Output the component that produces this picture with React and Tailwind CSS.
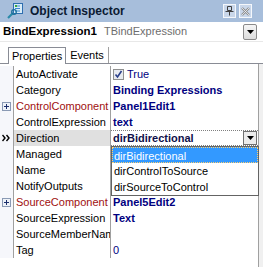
import React from 'react'

const rows = [
  { name: 'AutoActivate', value: 'True', kind: 'check' },
  { name: 'Category', value: 'Binding Expressions', kind: 'bold' },
  { name: 'ControlComponent', value: 'Panel1Edit1', kind: 'bold', red: true, expand: true },
  { name: 'ControlExpression', value: 'text', kind: 'bold' },
  { name: 'Direction', value: 'dirBidirectional', kind: 'selected' },
  { name: 'Managed', value: '', kind: 'plain' },
  { name: 'Name', value: '', kind: 'plain' },
  { name: 'NotifyOutputs', value: '', kind: 'plain' },
  { name: 'SourceComponent', value: 'Panel5Edit2', kind: 'bold', red: true, expand: true },
  { name: 'SourceExpression', value: 'Text', kind: 'bold' },
  { name: 'SourceMemberName', value: '', kind: 'plain' },
  { name: 'Tag', value: '0', kind: 'plain' },
]

function DownArrow() {
  return (
    <svg width="7" height="4" viewBox="0 0 7 4">
      <path d="M0 0h7L3.5 4z" fill="#000" />
    </svg>
  )
}

function ExpandBox() {
  return (
    <svg width="9" height="9" viewBox="0 0 9 9">
      <rect x="0.5" y="0.5" width="8" height="8" fill="#eef2f8" stroke="#8a9ab4" />
      <path d="M2 4.5h5M4.5 2v5" stroke="#1c2f6c" />
    </svg>
  )
}

function Row({ row }) {
  const sel = row.kind === 'selected'
  return (
    <div className="flex h-[16px] text-[11px] leading-[16px]">
      <div className="w-[14px] shrink-0 border-r border-[#a0a0a0] bg-[#f6f7fb] flex items-center justify-center">
        {row.expand && <ExpandBox />}
        {sel && (
          <svg width="10" height="8" viewBox="0 0 10 8">
            <path d="M0.5 1l2.5 3-2.5 3M4.5 1l2.5 3-2.5 3" stroke="#000" strokeWidth="1.4" fill="none" />
          </svg>
        )}
      </div>
      <div className={`w-[97px] shrink-0 border-r border-[#a0a0a0] pl-[2px] overflow-hidden whitespace-nowrap ${sel ? 'bg-[#e0e0e0]' : ''} ${row.red ? 'text-[#a01010]' : 'text-black'}`}>
        {row.name}
      </div>
      <div className={`flex-1 min-w-0 pl-[2px] flex items-center whitespace-nowrap ${sel ? 'border-y border-dotted border-[#808080]' : ''}`}>
        {row.kind === 'check' && (
          <>
            <span className="w-[11px] h-[11px] border border-[#8e8f8f] bg-[#e8eaf0] flex items-center justify-center mr-[3px]">
              <svg width="9" height="9" viewBox="0 0 9 9">
                <path d="M1.5 4.5l2 2.5 4-6" stroke="#2a3f8a" strokeWidth="1.6" fill="none" />
              </svg>
            </span>
            <span className="text-[#000080]">{row.value}</span>
          </>
        )}
        {row.kind === 'bold' && <span className="font-bold text-[#000080]">{row.value}</span>}
        {row.kind === 'plain' && <span className="text-[#000080]">{row.value}</span>}
        {sel && (
          <>
            <span className="font-bold text-[#10104a] flex-1">{row.value}</span>
            <span className="w-[14px] h-[14px] mr-[1px] border border-[#707070] bg-[#ececec] flex items-center justify-center">
              <DownArrow />
            </span>
          </>
        )}
      </div>
    </div>
  )
}

export default function App() {
  return (
    <div className="w-[263px] h-[267px] overflow-hidden bg-white font-['Liberation_Sans',Arial,sans-serif] relative">
      {/* title bar */}
      <div className="h-[22px] bg-[#a7bedb] flex items-center">
        <svg className="ml-[7px]" width="16" height="16" viewBox="0 0 16 16">
          <rect x="6.5" y="0.5" width="9" height="10" fill="#d8ecf8" stroke="#2f6fb0" />
          <path d="M8 3h5M8 5.5h5M8 8h5" stroke="#3a8ad0" />
          <rect x="8" y="2" width="2" height="2" fill="#3caa3c" />
          <path d="M1 15l5-5" stroke="#2a8aa8" strokeWidth="2.2" />
          <circle cx="7" cy="9" r="2.3" fill="none" stroke="#1b6f9a" strokeWidth="1.3" />
        </svg>
        <span className="ml-[7px] text-[12px] font-bold text-[#0b1a33]">Object Inspector</span>
        <div className="ml-auto mr-[11px] flex gap-[3px]">
          <span className="w-[13px] h-[14px] border border-[#f4f7fb] bg-[#c9d7ea] flex items-center justify-center">
            <svg width="9" height="10" viewBox="0 0 9 10">
              <path d="M2.5 0.5h4v4h-4zM0.5 5.5h8M4.5 5.5v4" stroke="#404040" fill="none" />
            </svg>
          </span>
          <span className="w-[13px] h-[14px] border border-[#f4f7fb] bg-[#c9d7ea] flex items-center justify-center">
            <svg width="9" height="9" viewBox="0 0 9 9">
              <path d="M1 1l7 7M8 1l-7 7" stroke="#909090" strokeWidth="2.4" />
              <path d="M1 1l7 7M8 1l-7 7" stroke="#eef2f8" strokeWidth="0.8" />
            </svg>
          </span>
        </div>
      </div>

      {/* component selector */}
      <div className="h-[20px] flex items-center pl-[3px] text-[11px] border-b border-[#e8e8e8]">
        <span className="font-bold text-[11.5px] text-black">BindExpression1</span>
        <span className="ml-[7px] text-[#6d6d6d]">TBindExpression</span>
        <span className="ml-auto mr-[6px] w-[14px] h-[16px] border border-[#8a8a8a] rounded-[2px] bg-gradient-to-b from-[#f6f6f6] to-[#dcdcdc] flex items-center justify-center">
          <DownArrow />
        </span>
      </div>

      {/* tabs */}
      <div className="h-[22px] pt-[5px] flex items-end border-b border-[#898c95] pl-[8px] text-[11px]">
        <div className="h-[17px] px-[3px] border border-b-0 border-[#898c95] bg-white leading-[16px] -mb-px text-black">
          Properties
        </div>
        <div className="h-[16px] pl-[4px] pr-[4px] leading-[16px] border-r border-[#a0a0a0] text-black">
          Events
        </div>
      </div>

      {/* grid */}
      <div className="w-[259px] h-[203px] border-r border-[#a0a0a0] pt-[2px] relative">
        {rows.map(r => (
          <Row key={r.name} row={r} />
        ))}

        {/* open dropdown */}
        <div className="absolute left-[111px] top-[82px] w-[148px] border border-[#646464] bg-white text-[11px] leading-[16px]">
          <div className="h-[16px] pl-[1px] bg-[#3399ff] text-white border border-dotted border-[#ffd070]">dirBidirectional</div>
          <div className="h-[16px] pl-[2px] text-black">dirControlToSource</div>
          <div className="h-[16px] pl-[2px] text-black">dirSourceToControl</div>
        </div>
      </div>
      <div className="absolute right-0 top-[64px] w-[4px] h-[203px] bg-[#f0f0f0]" />
    </div>
  )
}
